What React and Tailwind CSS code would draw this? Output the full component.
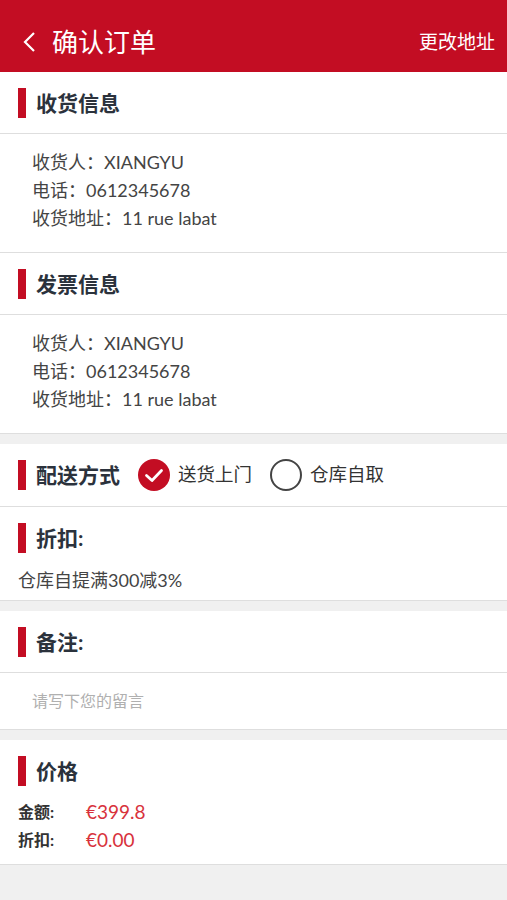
// 确认订单页面
const font = { fontFamily: 'Lato, "Noto Sans CJK SC", sans-serif' };

function SectionTitle({ children, border = true, extra }) {
  return (
    <div className={`h-[62px] flex items-center ${border ? 'border-b border-[#dedede]' : ''}`}>
      <div className="ml-[18px] w-[8px] h-[30px] bg-[#c30d23]" />
      <div className="ml-[10px] text-[21px] font-bold text-[#2b323c]">{children}</div>
      {extra}
    </div>
  );
}

function InfoBlock() {
  return (
    <div className="pl-[32px] pt-[14px] pb-[20px] text-[18px] leading-[28px] text-[#444]">
      <div>收货人：XIANGYU</div>
      <div>电话：0612345678</div>
      <div>收货地址：11 rue labat</div>
    </div>
  );
}

export default function App() {
  return (
    <div className="w-[507px] h-[900px] bg-[#f0f0f0] overflow-hidden" style={font}>
      <div className="h-[72px] bg-[#c30d23] flex items-center justify-between pt-[12px] px-[12px] text-white">
        <div className="flex items-center">
          <svg width="16" height="22" viewBox="0 0 16 22" className="ml-[10px]">
            <path d="M12 2 L3 11 L12 20" fill="none" stroke="white" strokeWidth="2.2" />
          </svg>
          <span className="ml-[14px] text-[26px]">确认订单</span>
        </div>
        <span className="text-[19px]">更改地址</span>
      </div>

      <div className="bg-white border-b border-[#dedede]">
        <SectionTitle>收货信息</SectionTitle>
        <InfoBlock />
      </div>
      <div className="bg-white border-b border-[#dedede]">
        <SectionTitle>发票信息</SectionTitle>
        <InfoBlock />
      </div>

      <div className="mt-[10px] bg-white border-b border-[#dedede]">
        <SectionTitle
          border={false}
          extra={
            <div className="flex items-center ml-[18px] text-[18.5px] text-[#333]">
              <div className="w-[32px] h-[32px] rounded-full bg-[#c30d23] flex items-center justify-center">
                <svg width="20" height="15" viewBox="0 0 20 15">
                  <path d="M2.5 7.5 L8 12.5 L17.5 2.5" fill="none" stroke="white" strokeWidth="2.8" strokeLinecap="round" strokeLinejoin="round" />
                </svg>
              </div>
              <span className="ml-[8px]">送货上门</span>
              <div className="ml-[18px] w-[32px] h-[32px] rounded-full border-2 border-[#444]" />
              <span className="ml-[8px]">仓库自取</span>
            </div>
          }
        >
          配送方式
        </SectionTitle>
      </div>

      <div className="bg-white border-b border-[#dedede]">
        <SectionTitle border={false}>折扣:</SectionTitle>
        <div className="pl-[18px] pb-[9px] text-[18px] leading-[22px] text-[#444]">仓库自提满300减3%</div>
      </div>

      <div className="mt-[10px] bg-white border-b border-[#dedede]">
        <SectionTitle>备注:</SectionTitle>
        <div className="h-[56px] pl-[32px] flex items-center text-[16px] text-[#b0b0b0]">请写下您的留言</div>
      </div>

      <div className="mt-[10px] bg-white border-b border-[#dedede]">
        <SectionTitle border={false}>价格</SectionTitle>
        <div className="pl-[18px] pb-[10px] -mt-[4px]">
          <div className="flex items-center h-[28px]">
            <span className="w-[68px] text-[16px] font-bold text-[#333]">金额:</span>
            <span className="text-[19px] text-[#d8323c]">€399.8</span>
          </div>
          <div className="flex items-center h-[28px]">
            <span className="w-[68px] text-[16px] font-bold text-[#333]">折扣:</span>
            <span className="text-[19px] text-[#d8323c]">€0.00</span>
          </div>
        </div>
      </div>
    </div>
  );
}
